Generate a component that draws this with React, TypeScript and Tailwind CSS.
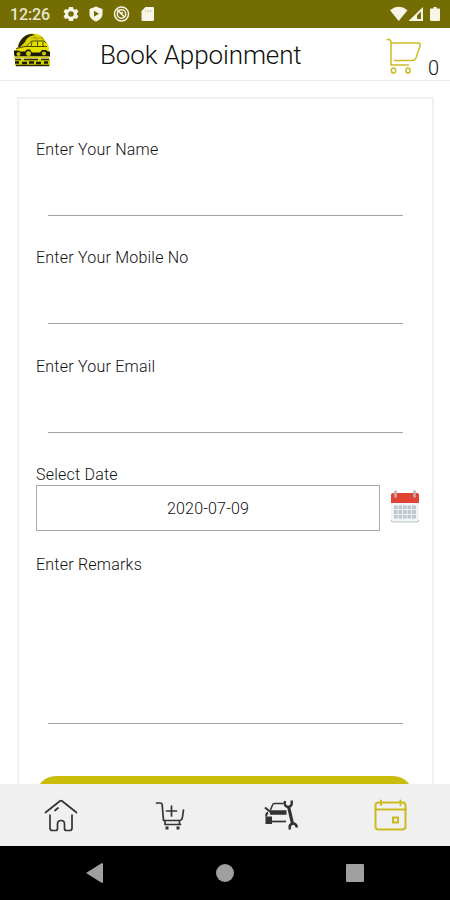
const FIELDS = ['Enter Your Name', 'Enter Your Mobile No', 'Enter Your Email'];

function StatusBar() {
  return (
    <div className="flex h-7 shrink-0 items-center justify-between bg-[#746d03] pr-2 pl-2.5 text-[#f8f6e8]">
      <div className="flex items-center">
        <span className="w-[53px] pt-[2px] text-[16px] leading-[26px] font-medium tracking-[-0.1px] text-[#e9e6cf]">12:26</span>
        <svg className="h-4 w-[92px]" viewBox="0 0 92 16" fill="currentColor">
          <path
            fillRule="evenodd"
            d="M6 1h4l.5 2 1.3.8 2-.8 1.7 3-1.6 1.3v1.4L15.500 10l-1.700 3-2-.8-1.300.8-.5 2H6l-.5-2-1.300-.8-2 .8-1.700-3 1.600-1.300V7.300L.5 6l1.700-3 2 .8L5.500 3zM8 5.200a2.800 2.800 0 1 0 0 5.600 2.800 2.800 0 0 0 0-5.600z"
          />
          <path fillRule="evenodd" d="M33 .5l6.500 2.500v5c0 3.500-2.800 6.300-6.500 7.500-3.700-1.200-6.500-4-6.500-7.500V3zM31 4.800v6l5-3z" />
          <g fill="none" stroke="currentColor">
            <circle cx="58.500" cy="8" r="7" strokeWidth="1.500" />
            <circle cx="58.500" cy="8" r="4.200" strokeWidth="1.500" />
            <path d="M54 3.500l8 8M57 7.500l3-1" strokeWidth="1.700" />
          </g>
          <path d="M82.500 1H90q1 0 1 1v12q0 1-1 1H79.500q-1 0-1-1V5z" />
          <path d="M82.800 4v2M85.300 4v2M87.800 4v2" stroke="#c9c594" />
        </svg>
      </div>
      <svg className="h-4 w-[52px]" viewBox="0 0 52 16" fill="currentColor">
        <path d="M0 4.200Q8.700-2.500 17.500 4.200L8.700 15z" />
        <path fillRule="evenodd" d="M18.500 15L33 1v14zM27 9.500V13h4V5.500z" />
        <path d="M43.500 1h3v1.500H49q1 0 1 1V14q0 1-1 1h-8q-1 0-1-1V3.500q0-1 1-1h2.500z" />
      </svg>
    </div>
  );
}

function Logo() {
  return (
    <svg className="h-[34px] w-[38px]" viewBox="0 0 38 34">
      <path d="M4 17C6 5 13 .5 20 .5S34 5 35 17l1 6H2z" fill="#dcd600" />
      <path d="M5 14C7 5 13 1 19 1l3 1c-6 1-8 3-10 7l-5 5z" fill="#252600" />
      <path d="M18 5h12M20 1l4 6M29 4l2 5" fill="none" stroke="#a19d00" strokeWidth="0.900" />
      <path d="M2 20l1-4 5-2 4-1 4-4 3-1.500h12l3 2 2 5v5H2z" fill="#e6e000" />
      <path d="M13 13.500l4-4 2-1.500h12l2 2M18 14l1-5M24.500 14V8.500M30 14V9M3 15.500l9-2h22" fill="none" stroke="#4a4900" strokeWidth="1" />
      <path d="M1 17.500h4l2 1h5l2-2 3 0 2 3h8l2-2.500h4l2 1.500h2v5H2l-1-2z" fill="#191a00" />
      <circle cx="5.500" cy="21" r="2" fill="#c9c400" />
      <circle cx="15.500" cy="20.500" r="2.500" fill="#c9c400" />
      <circle cx="31" cy="20.500" r="2.100" fill="#c9c400" />
      <path d="M1 23.500h35v2H1z" fill="#d3ce00" />
      <path d="M2 26h35v7H2z" fill="#d3ce00" />
      <path d="M2 26.500h6M11 26.500h14M28 26.500h8M3 32.500h33" stroke="#282900" strokeWidth="1.300" />
      <path d="M2 29.500h4M9 30h5M16 29.500h5M23 30h5M31 29.500h4" stroke="#1b1c00" strokeWidth="2.600" fill="none" />
    </svg>
  );
}

function Header() {
  return (
    <header className="flex h-[53px] shrink-0 border-b border-[#e9ebeb] pl-[13px]">
      <div className="w-[87px] pt-[5px]">
        <Logo />
      </div>
      <h1 className="w-[286px] text-[26px] leading-[54px] font-light tracking-[-0.1px] text-[#111]">Book Appoinment</h1>
      <svg className="mt-2.5 h-9 w-[37px]" viewBox="0 0 37 36" fill="none" stroke="#cbbd26" strokeWidth="1.500">
        <path d="M.5 1.500h3l1.500 2v23.500h18" />
        <path d="M5 5h27q3 0 2 3l-4 12q-1 2.500-4 2.500H8" />
        <ellipse cx="7.500" cy="32.500" rx="2.200" ry="2.600" />
        <ellipse cx="22" cy="32.500" rx="2.200" ry="2.600" />
      </svg>
      <span className="pt-[26px] pl-[5px] text-[20px] leading-7 font-light text-[#111]">0</span>
    </header>
  );
}

function Label({ text }: { text: string }) {
  return (
    <span className="block h-[22px] text-[16px] leading-[24px] font-light tracking-[0.22px] text-[#111]">{text}</span>
  );
}

function CalendarEmoji() {
  return (
    <svg className="mb-1 ml-2.5 h-[34px] w-[30px]" viewBox="0 0 30 34">
      <path d="M1 13h28v18q0 2-2 2H3q-2 0-2-2z" fill="#f2f5f6" />
      <path d="M1 31q0 2 2 2h24q2 0 2-2" fill="none" stroke="#b9c3c8" />
      <path d="M1 14V6q0-2 2-2h24q2 0 2 2v8z" fill="#e04234" />
      <path d="M4 16.500h22v13H4z" fill="#c0c8cd" />
      <path d="M4 20.500h22M4 25.500h22M8 16v14M12.500 16v14M17 16v14M21.500 16v14" stroke="#edf1f3" />
      <path d="M5.500 2.500v5M24.500 2.500v5" stroke="#c4aeac" strokeWidth="2.600" strokeLinecap="round" />
    </svg>
  );
}

function Form() {
  return (
    <main className="min-h-0 flex-1 overflow-hidden px-[17px] pt-4">
      <div className="h-[800px] w-[417px] border-2 border-[#eff0f0] pt-[39px] pl-[17px]">
        {FIELDS.map((field) => (
          <div key={field} className="h-[108.400px]">
            <Label text={field} />
            <div className="ml-3 h-[56px] w-[355px] border-b border-[#a2a4a4]" />
          </div>
        ))}
        <Label text="Select Date" />
        <div className="flex items-center">
          <div className="h-[46px] w-[344px] border border-[#a9a9a9] text-center text-[16px] leading-[46px] font-light tracking-[0.200px] text-[#111]">
            2020-07-09
          </div>
          <CalendarEmoji />
        </div>
        <div className="mt-[22px]">
          <Label text="Enter Remarks" />
          <div className="ml-3 h-[149px] w-[355px] border-b border-[#a2a4a4]" />
        </div>
        <div className="mt-[52px] h-11 w-[377px] rounded-[20px] bg-[#c9bc0b]" />
      </div>
    </main>
  );
}

function TabBar() {
  return (
    <nav className="flex h-[62px] shrink-0 items-center justify-between bg-[#f0f0f0] pr-[41px] pl-[43px] text-[#333]">
      <svg className="h-9 w-9" viewBox="0 0 36 36" fill="none" stroke="currentColor" strokeWidth="1.700" strokeLinecap="round">
        <path d="M2.500 15.500L17 4q1-.8 2 0l14.500 11.500" />
        <path d="M7 18v13q0 2.500 2.500 2.500h3q2 0 2-2V27q0-3.500 3.500-3.500t3.500 3.500v4.500q0 2 2 2h3q2.500 0 2.500-2.500V18" />
        <path d="M12 13.500l3-2.500" />
      </svg>
      <svg className="h-9 w-9" viewBox="0 0 36 36" fill="none" stroke="currentColor" strokeWidth="1.700" strokeLinecap="round">
        <path d="M3.500 6H7.500q1.500 0 1.700 2l1.300 15.500h15.500q3 0 3.400-3L30.500 13M12 27.500h15.500M12 23.500v4M26.500 23.500v4" />
        <path d="M18.500 9v10M13.500 14h10" />
        <path d="M14 29.500v3M25 29.500v3" strokeWidth="3" strokeLinecap="butt" />
      </svg>
      <svg className="h-9 w-9" viewBox="0 0 36 36" fill="none" stroke="currentColor">
        <path d="M7.500 13l2-5q.5-1.500 2-1.500h9" strokeWidth="1.500" />
        <path d="M2 10.500l5.500 4.500M5 15.500q-2 1-2 4" strokeWidth="2" />
        <path d="M7 15.500h16.500" strokeWidth="4.500" />
        <path d="M2.500 19.500h6.500v7.500H2.500z" fill="currentColor" stroke="none" />
        <path d="M9 24.500h14" strokeWidth="1.700" />
        <path d="M22 4q-1.500 5 3 6 5-.5 3.500-6.500M34 30.500q-1-4.500-4.500-4-4 1.500-2.500 6" strokeWidth="2.500" />
        <path d="M25.500 9.500l4 17" strokeWidth="3.200" />
      </svg>
      <svg className="h-9 w-9" viewBox="0 0 36 36" fill="none" stroke="#c9bb20" strokeWidth="2" strokeLinecap="round">
        <rect x="2.500" y="5.500" width="30" height="27" rx="3" />
        <path d="M3 12.500h30M8 3.500v4.500M27.500 3.500v4.500" />
        <rect x="20" y="20.500" width="5" height="5" />
      </svg>
    </nav>
  );
}

function SystemNav() {
  return (
    <div className="flex h-[54px] shrink-0 items-center justify-between bg-black px-[86px]">
      <svg className="h-5 w-[17px]" viewBox="0 0 17 20" fill="#a0a0a0">
        <path d="M0 10L15.500.3Q17-.2 17 1v18q0 1.200-1.500.7z" />
      </svg>
      <div className="h-[18px] w-[18px] rounded-full bg-[#a0a0a0]" />
      <div className="h-[18px] w-[18px] rounded-[1px] bg-[#a0a0a0]" />
    </div>
  );
}

export default function App() {
  return (
    <div className="flex h-[900px] w-[450px] flex-col overflow-hidden bg-white font-['Roboto',sans-serif]">
      <StatusBar />
      <Header />
      <Form />
      <TabBar />
      <SystemNav />
    </div>
  );
}
